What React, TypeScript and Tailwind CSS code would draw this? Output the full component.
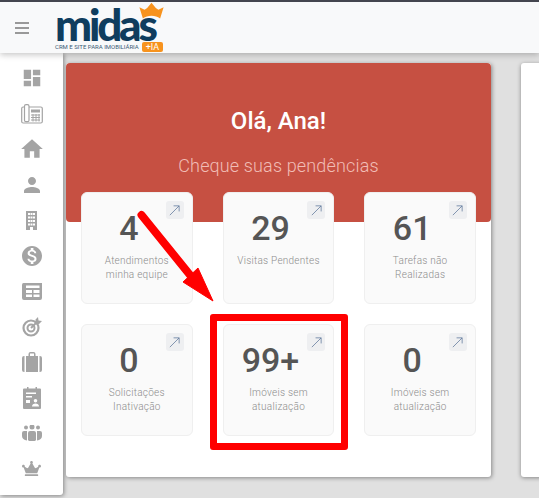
import React from "react";
import { MdDashboard, MdHome, MdPerson, MdMonetizationOn } from "react-icons/md";
import { FaCrown } from "react-icons/fa";

type Item = { value: string; label: string[] };

const items: Item[] = [
  { value: "4", label: ["Atendimentos", "minha equipe"] },
  { value: "29", label: ["Visitas Pendentes"] },
  { value: "61", label: ["Tarefas não", "Realizadas"] },
  { value: "0", label: ["Solicitações", "Inativação"] },
  { value: "99+", label: ["Imóveis sem", "atualização"] },
  { value: "0", label: ["Imóveis sem", "atualização"] },
];

const grey = "#a4a4a4";

const PhoneIcon = () => (
  <svg width="22" height="20" viewBox="0 0 22 20" fill="none" stroke={grey} strokeWidth="1.2">
    <rect x="0.7" y="3" width="20.6" height="16" rx="1.5" />
    <rect x="3.5" y="0.7" width="4.5" height="17" rx="1.5" fill="#fff" />
    <rect x="10" y="5.5" width="9" height="3" fill={grey} stroke="none" />
    <path d="M10 11h9M10 13.500h9M10 16h9M12 10v7.500M15 10v7.500M18 10v7.500" strokeWidth="1" />
  </svg>
);

const BuildingIcon = () => (
  <svg width="11" height="19" viewBox="0 0 11 19">
    <path
      fill={grey}
      fillRule="evenodd"
      d="M0 0h11v19H7v-3H4v3H0ZM2 2v2h2V2Zm2.500 0v2h2V2ZM7 2v2h2V2ZM2 5.500v2h2v-2Zm2.500 0v2h2v-2Zm2.500 0v2h2v-2ZM2 9v2h2V9Zm2.500 0v2h2V9ZM7 9v2h2V9ZM2 12.500v2h2v-2Zm2.500 0v2h2v-2Zm2.500 0v2h2v-2Z"
    />
  </svg>
);

const NewsIcon = () => (
  <svg width="20" height="17" viewBox="0 0 20 17">
    <path
      fill={grey}
      fillRule="evenodd"
      d="M1.500 0H20v15a2 2 0 0 1-2 2H2a2 2 0 0 1-2-2V2q0-2 1.500-2ZM4 2.500V5h13.500V2.500ZM4 7v3h6V7Zm7.500 0v3h6V7ZM4 11.500V14h6v-2.500Zm7.500 0V14h6v-2.500Z"
    />
  </svg>
);

const TargetIcon = () => (
  <svg width="20" height="20" viewBox="0 0 20 20" fill="none" stroke={grey}>
    <circle cx="9" cy="11" r="7.500" strokeWidth="2.200" />
    <circle cx="9" cy="11" r="3.500" strokeWidth="2" />
    <path d="M9 11 16 4" strokeWidth="2" />
    <path d="M13.500 2.500 16 0l.5 3.500L20 4l-3 3h-3.500Z" fill={grey} stroke="none" />
  </svg>
);

const CaseIcon = () => (
  <svg width="20" height="20" viewBox="0 0 20 20">
    <path
      fill={grey}
      fillRule="evenodd"
      d="M6.500 4V2a2 2 0 0 1 2-2h3a2 2 0 0 1 2 2v2H16v16H4V4ZM8 4h4V1.500H8ZM0 6a2 2 0 0 1 2-2h.5v16H2a2 2 0 0 1-2-2ZM17.500 4h.5a2 2 0 0 1 2 2v12a2 2 0 0 1-2 2h-.5Z"
    />
  </svg>
);

const BoardIcon = () => (
  <svg width="18" height="22" viewBox="0 0 18 22">
    <path
      fill={grey}
      fillRule="evenodd"
      d="M1 1.500h3V0h1.500v1.500h7V0H14v1.500h3a1 1 0 0 1 1 1V21a1 1 0 0 1-1 1H1a1 1 0 0 1-1-1V2.500a1 1 0 0 1 1-1ZM3 5.500V7h10V5.500ZM3 9v1.500h6V9Zm0 4v3h4v-3Zm9.500-1a1.800 1.800 0 1 0 0 3.600 1.800 1.800 0 0 0 0-3.600ZM9 19.500h7c0-2-1.500-3-3.500-3s-3.500 1-3.500 3Z"
    />
  </svg>
);

const TeamIcon = () => (
  <svg width="20" height="16" viewBox="0 0 20 16" fill={grey}>
    <circle cx="4" cy="2.500" r="2" />
    <circle cx="10" cy="2" r="2.500" />
    <circle cx="16" cy="2.500" r="2" />
    <path d="M2 6h3v9.500C2 15 0 13.500 0 11V8q0-2 2-2ZM15 6h3q2 0 2 2v3c0 2.500-2 4-5 4.500ZM8 6h4a2 2 0 0 1 2 2v7a4 1.200 0 0 1-8 0V8a2 2 0 0 1 2-2Z" />
  </svg>
);

const nav = [
  <MdDashboard key="a" size={22} color={grey} />,
  <PhoneIcon key="b" />,
  <MdHome key="c" size={26} color={grey} />,
  <MdPerson key="d" size={24} color={grey} />,
  <BuildingIcon key="e" />,
  <MdMonetizationOn key="f" size={24} color={grey} />,
  <NewsIcon key="g" />,
  <TargetIcon key="h" />,
  <CaseIcon key="i" />,
  <BoardIcon key="j" />,
  <TeamIcon key="k" />,
  <FaCrown key="l" size={19} color={grey} />,
];

const Card = ({ item }: { item: Item }) => (
  <div className="relative h-[112px] rounded-md border border-[#efefef] bg-[#fafafa] pt-[14px] text-center">
    <button className="absolute right-[8px] top-[8px] flex h-[18px] w-[18px] items-center justify-center rounded-[3px] bg-[#eeeff1]">
      <svg width="13" height="13" viewBox="0 0 14 14" fill="none" stroke="#5b7499" strokeWidth="0.8">
        <path d="M2 12 12 2M6 2h6v6" />
      </svg>
    </button>
    <div className="pr-[16px] text-[34px] font-medium leading-[42px] text-[#555]">{item.value}</div>
    <div className="mt-[5px] text-[10px] font-light leading-[14px] tracking-[0.25px] text-[#8c8c8c]">
      {item.label.map((l) => (
        <div key={l}>{l}</div>
      ))}
    </div>
  </div>
);

const App = () => {
  return (
    <div className="relative h-[498px] w-[539px] overflow-hidden bg-[#e0e0e0] font-['Roboto',sans-serif]">
      <header className="relative z-10 flex h-[53px] items-center border-t-2 border-[#44454f] bg-[#f8f9fa] shadow-[0_2px_6px_rgba(0,0,0,0.22)]">
        <div className="ml-[15px] flex w-[14px] flex-col gap-[3px]">
          <span className="h-[2px] bg-[#999]" />
          <span className="h-[2px] bg-[#999]" />
          <span className="h-[2px] bg-[#999]" />
        </div>
        <div className="relative ml-[26px] h-[51px] w-[115px]">
          <div className="absolute left-0 top-[3px] font-['Lato',sans-serif] text-[44px] font-black leading-[38px] tracking-[-3.2px] text-[#0f3d5e]">
            midas
          </div>
          <svg className="absolute left-[82px] top-0" width="29" height="19" viewBox="0 0 30 22">
            <path fill="#f7931e" d="M1 6l6 3 3-2 5-6 5 6 3 2 6-3-4 13c-3-2-6-3-10-3s-7 1-10 3Z" />
          </svg>
          <div className="absolute left-0 top-[41px] whitespace-nowrap text-[6px] leading-[8px] text-[#3a5a75]">
            CRM E SITE PARA IMOBILIÁRIA
          </div>
          <div className="absolute left-[87px] top-[40px] flex h-[10px] w-[21px] items-center justify-center rounded-[2px] bg-[#f7931e] text-[9px] leading-[10px] text-white">
            +IA
          </div>
        </div>
      </header>

      <div className="flex">
        <aside className="flex h-[442px] w-[63px] shrink-0 flex-col items-center justify-between rounded-br-[3px] bg-white pb-[14px] pt-[13px] shadow-[1px_1px_4px_rgba(0,0,0,0.4)]">
          {nav.map((icon, i) => (
            <div key={i} className="flex h-[24px] items-center justify-center">
              {icon}
            </div>
          ))}
        </aside>

        <main className="flex gap-[30px] pl-[3px] pt-[10px]">
          <section className="h-[414px] w-[425px] shrink-0 rounded-[3px] bg-white shadow-[1px_1px_4px_rgba(0,0,0,0.4)]">
            <div className="h-[159px] rounded-[4px] bg-[#c65042] pt-[43px] text-center">
              <div className="text-[24px] font-medium leading-[30px] text-white">Olá, Ana!</div>
              <div className="mt-[18px] text-[18px] font-light leading-[24px] tracking-[0.15px] text-[#f1bdb6]">
                Cheque suas pendências
              </div>
            </div>
            <div className="-mt-[30px] grid grid-cols-3 gap-x-[30px] gap-y-[20px] px-[15px]">
              {items.map((item, i) => (
                <Card key={i} item={item} />
              ))}
            </div>
          </section>
          <section className="h-[414px] w-[100px] shrink-0 rounded-[3px] bg-white shadow-[0_1px_4px_rgba(0,0,0,0.4)]" />
        </main>
      </div>

      {/* marcações por cima da tela */}
      <div className="absolute left-[210px] top-[314px] h-[136px] w-[138px] rounded-[3px] border-[7px] border-[#ff0000]" />
      <svg className="absolute left-0 top-0" width="539" height="498" viewBox="0 0 539 498">
        <path d="M141.500 215 190 275" stroke="#ff0000" strokeWidth="8" strokeLinecap="round" />
        <path d="M213 301 183 282 198 268Z" fill="#ff0000" stroke="#ff0000" strokeWidth="1" />
      </svg>
    </div>
  );
};

export default App;
